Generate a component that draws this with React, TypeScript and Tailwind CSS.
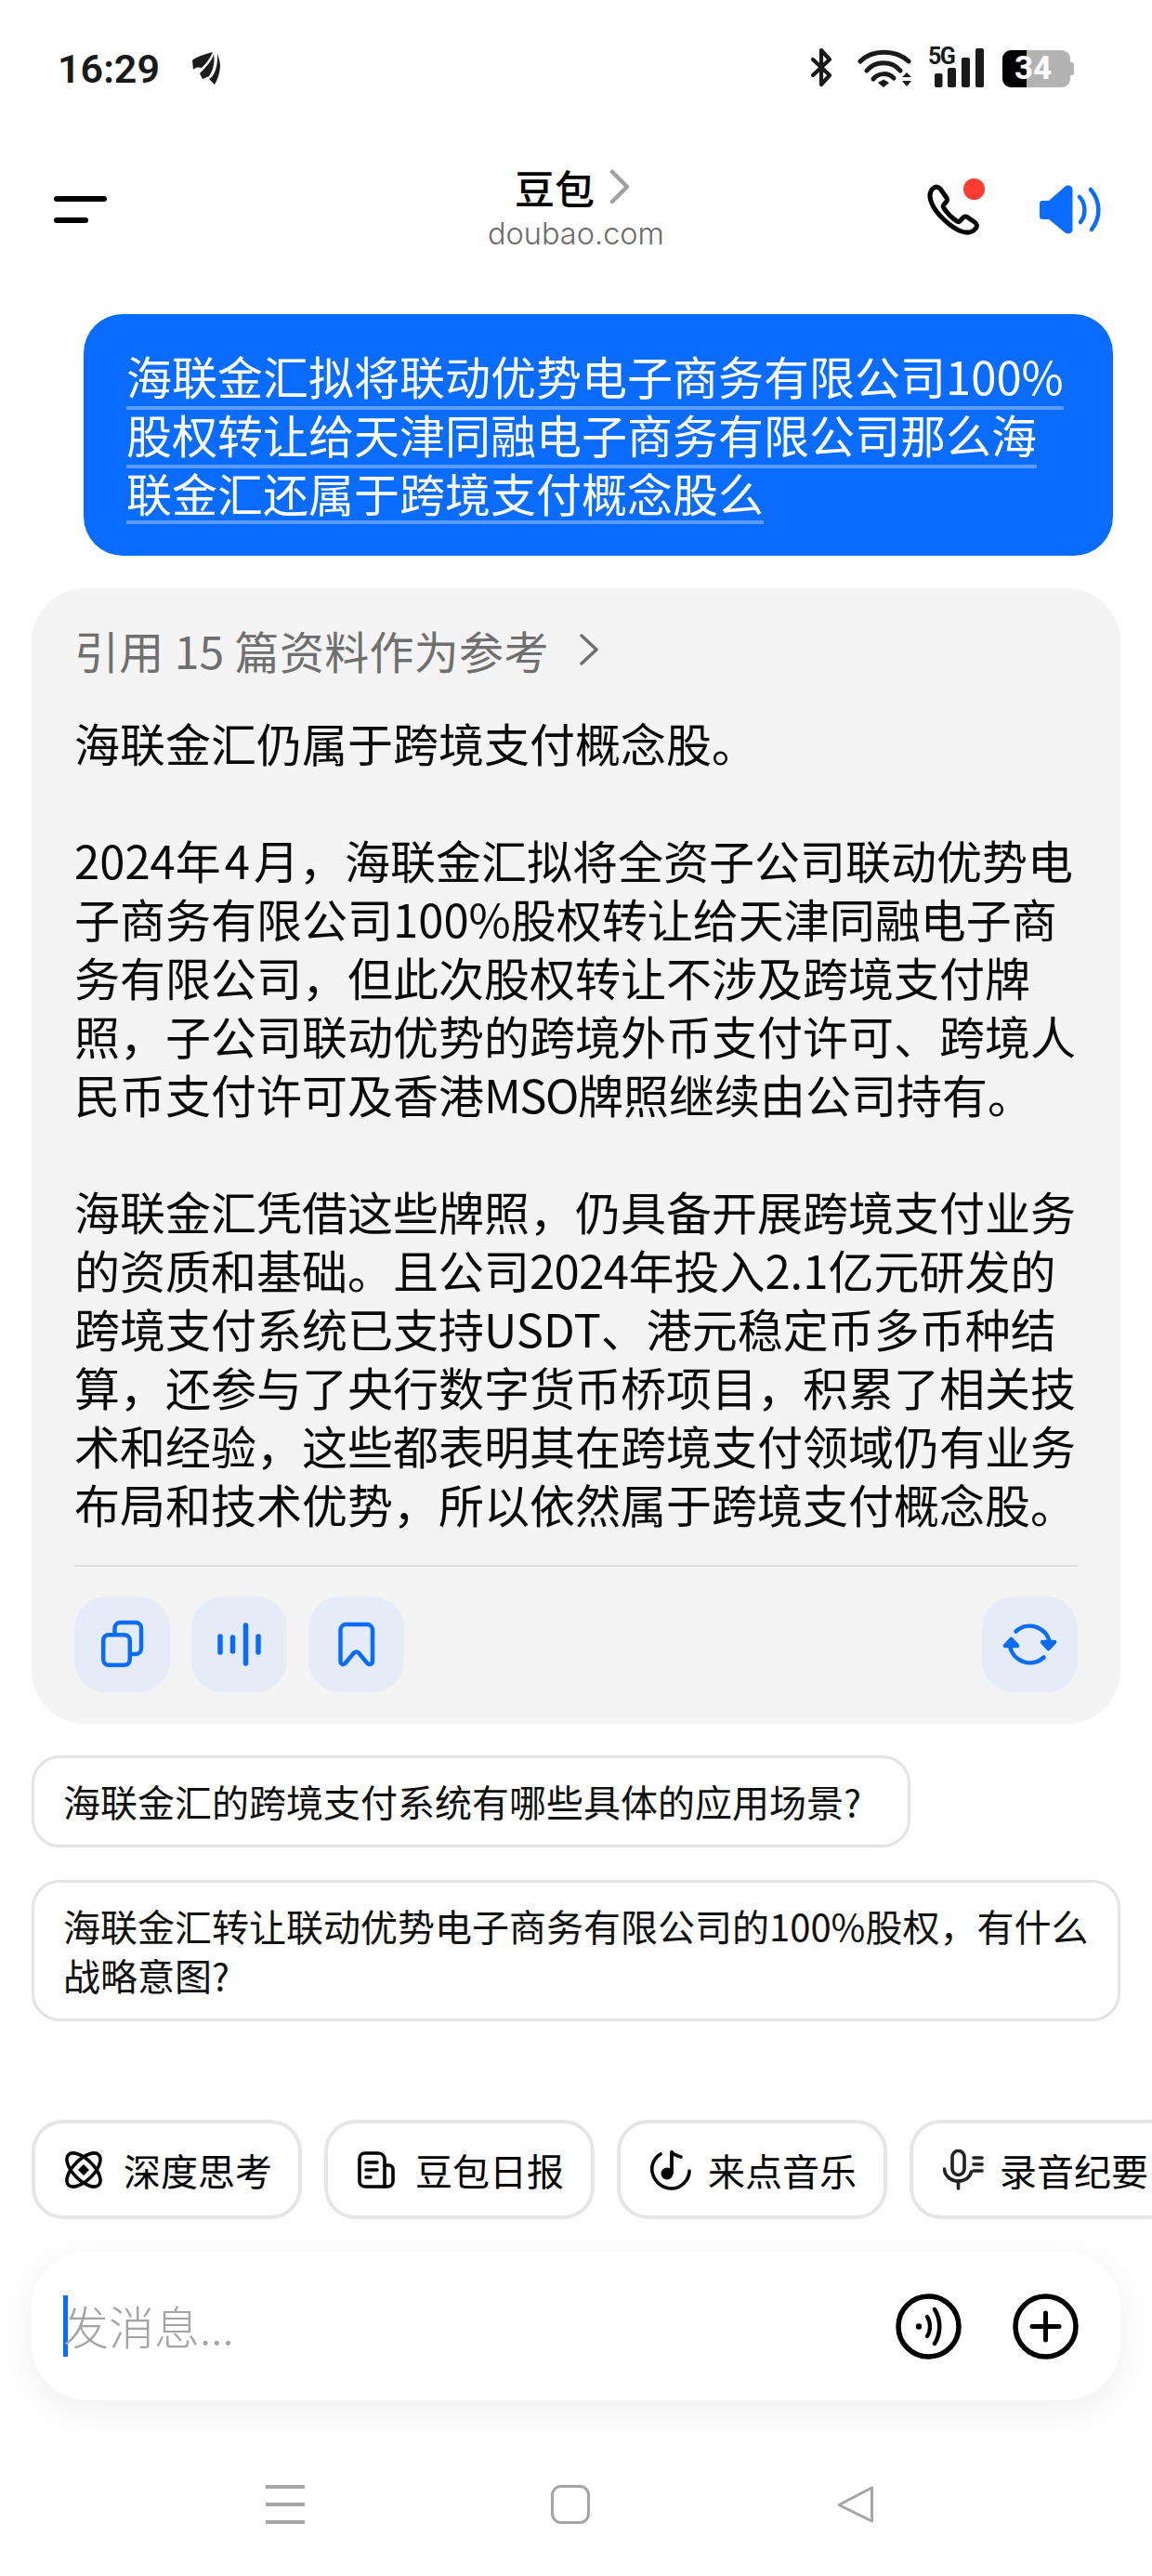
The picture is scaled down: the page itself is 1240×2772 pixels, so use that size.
import type {ReactNode} from "react";

const answer: ReactNode[] = [
	"海联金汇仍属于跨境支付概念股。",
	"",
	<>
		2024年<span className="mx-[4px]">4</span>月，海联金汇拟将全资子公司联动优势电
	</>,
	"子商务有限公司100%股权转让给天津同融电子商",
	"务有限公司，但此次股权转让不涉及跨境支付牌",
	"照，子公司联动优势的跨境外币支付许可、跨境人",
	<>
		民币支付许可及香港<span className="tracking-[-1.5px]">MSO</span>牌照继续由公司持有。
	</>,
	"",
	"海联金汇凭借这些牌照，仍具备开展跨境支付业务",
	<>
		的资质和基础。且公司<span className="tracking-[-0.6px]">2024</span>年投入2.1亿元研发的
	</>,
	"跨境支付系统已支持USDT、港元稳定币多币种结",
	"算，还参与了央行数字货币桥项目，积累了相关技",
	"术和经验，这些都表明其在跨境支付领域仍有业务",
	"布局和技术优势，所以依然属于跨境支付概念股。",
];

const question = [
	{text: "海联金汇拟将联动优势电子商务有限公司100%", offset: "underline-offset-[12px]"},
	{text: "股权转让给天津同融电子商务有限公司那么海", offset: "underline-offset-[12px]"},
	{text: "联金汇还属于跨境支付概念股么", offset: "underline-offset-[9px]"},
];

function LeafIcon() {
	return (
		<svg width="30" height="35" viewBox="0 0 30 35" fill="#1c1c1c">
			<path d="M22 0 C15 2 6 4 0 9 L1 19 C5 15 8 17 10 17 C14 13 18 9 22 0Z" />
			<path d="M23 2 C22 7 19 12 8 23 L11 29 C13 28 16 27 18 26 C21 22 25 13 23 2Z" />
			<path d="M27 1 C28 6 30 10 30 14 C30 22 27 30 24 35 L18 29 C23 27 28 16 27 1Z" />
		</svg>
	);
}

function StatusIcons() {
	return (
		<div className="flex items-start">
			<svg width="24" height="44" viewBox="0 0 24 44" fill="none" stroke="#1a1a1a" strokeWidth="4.2" strokeLinecap="round" strokeLinejoin="round">
				<path d="M3 13 L21 30 L12 40 V3 L21 13 L3 30" />
			</svg>
			<svg className="ml-[27px]" width="60" height="44" viewBox="0 0 60 44" fill="none" stroke="#1a1a1a" strokeWidth="5" strokeLinecap="round">
				<path d="M3 15 C16 2 41 2 55 15" />
				<path d="M10 25 C19 14 37 14 46 25" />
				<path d="M17 34 C23 27 33 27 39 33" />
				<path d="M22 38 L28 34.5 L34 38 L28 43Z" fill="#1a1a1a" stroke="none" />
				<path d="M48 32 L53 27 L58 32Z M48 36 H58 L53 42Z" fill="#1a1a1a" stroke="none" />
			</svg>
			<div className="relative ml-[16px] w-[60px] h-[44px]">
				<svg width="60" height="44" viewBox="0 0 60 44" fill="#1a1a1a">
					<rect x="7" y="28" width="8.5" height="15" rx="2" />
					<rect x="21" y="22" width="9" height="21" rx="2" />
					<rect x="36" y="11" width="9" height="32" rx="2" />
					<rect x="51" y="1" width="9" height="42" rx="2" />
				</svg>
				<span className="absolute left-0 top-[-3px] text-[25px] leading-[25px] font-bold tracking-[-1.5px] text-[#1a1a1a] font-['Roboto',sans-serif]">5G</span>
			</div>
			<div className="relative ml-[20px] flex items-center mt-[3px]">
				<div className="flex w-[73px] h-[40px] rounded-[9px] overflow-hidden">
					<div className="w-[26px] bg-black" />
					<div className="flex-1 bg-[#b3b3b3]" />
				</div>
				<div className="w-[4px] h-[14px] bg-[#b3b3b3] rounded-r-[3px]" />
				<span className="absolute left-[13px] top-0 h-[40px] leading-[40px] text-[35px] font-bold text-white font-['Roboto',sans-serif]">34</span>
			</div>
		</div>
	);
}

function PhoneIcon() {
	return (
		<svg width="56" height="56" viewBox="0 0 56 56" fill="none" stroke="#000" strokeWidth="5" strokeLinejoin="round">
			<path d="M6 5 C9 2 12 3 14 5 L21 15 C22 17 21 19 20 20 L18 22 C17 23 17 25 18 26 C22 32 27 37 32 40 C34 41 35 41 36 39 L38 37 C39 35 41 34.5 43 35.5 L51 41 C54 43 54 46 52 48 C48 53 43 53 37 51 C26 47 10 33 5 21 C2 14 2 9 6 5 Z" />
		</svg>
	);
}

function SpeakerIcon() {
	return (
		<svg width="66" height="54" viewBox="0 0 66 54" fill="none">
			<path d="M3 17 H10 L27 2 C31 -1 35.5 1 35.5 5 V48 C35.5 52 31 54 27 51 L10 37 H3 Q0 37 0 34 V20 Q0 17 3 17Z" fill="#0a6cff" />
			<path d="M43 13 C50 20 50 33 44 40" stroke="#0a6cff" strokeWidth="4.5" strokeLinecap="round" />
			<path d="M55 5 C66 18 66 35 56 48" stroke="#0a6cff" strokeWidth="4.5" strokeLinecap="round" />
		</svg>
	);
}

function ActionButton({children}: {children: ReactNode}) {
	return (
		<div className="w-[103px] h-[103px] rounded-[34px] bg-[#e5ecf7]">
			<svg width="103" height="103" viewBox="0 0 103 103" fill="none" stroke="#0a6cff" strokeWidth="4.5" strokeLinecap="round" strokeLinejoin="round">
				{children}
			</svg>
		</div>
	);
}

function AtomIcon() {
	return (
		<svg width="40" height="40" viewBox="0 0 40 40" fill="none" stroke="#000" strokeWidth="3.6">
			<ellipse cx="20" cy="20" rx="23" ry="11" transform="rotate(45 20 20)" />
			<ellipse cx="20" cy="20" rx="23" ry="11" transform="rotate(-45 20 20)" />
			<path d="M20 14 L26 20 L20 26 L14 20Z" fill="#000" stroke="none" />
		</svg>
	);
}

function DailyIcon() {
	return (
		<svg width="40" height="40" viewBox="0 0 40 40" fill="none" stroke="#000" strokeWidth="3.6" strokeLinecap="round" strokeLinejoin="round">
			<path d="M8 2 H22 C26 2 29 5 29 9 V38 H8 C4 38 2 35 2 32 V8 C2 5 4 2 8 2Z" />
			<path d="M29 15 H34 C37 15 38 18 38 20 V32 C38 36 35 38 32 38 H29" />
			<path d="M9 12 H21 M9 20 H21 M9 28 H14" />
		</svg>
	);
}

function MusicIcon() {
	return (
		<svg width="44" height="44" viewBox="0 0 44 44" fill="none" stroke="#000" strokeWidth="3.6" strokeLinecap="round">
			<path d="M11 5 C3 10 1 18 2 24 C4 35 13 42 23 42 C33 42 42 33 42 23" />
			<path d="M23 3 V25" strokeWidth="3.8" />
			<path d="M23 3 C26 6 29 7 33 8" />
			<circle cx="18" cy="26" r="6.5" fill="#000" stroke="none" />
		</svg>
	);
}

function MicIcon() {
	return (
		<svg width="44" height="44" viewBox="0 0 44 44" fill="none" stroke="#222" strokeWidth="3.6" strokeLinecap="round">
			<rect x="10" y="1.5" width="13" height="26" rx="6.5" />
			<path d="M1.5 21 C2 29 9 34 16.5 34 C24 34 29 30 30.5 24" />
			<path d="M16.5 34 V42" />
			<path d="M33 9 H42 M33 23 H42 M33 16 H42" strokeWidth="3.6" />
		</svg>
	);
}

function QuickChip({icon, label, iconGap}: {icon: ReactNode; label: string; iconGap: string}) {
	return (
		<div className="shrink-0 w-[291px] h-[107px] rounded-[34px] border-[4px] border-[#e6e6e6] bg-white flex items-center pl-[32px]">
			{icon}
			<span className={`${iconGap} text-[40px] leading-[50px] whitespace-nowrap text-black`}>{label}</span>
		</div>
	);
}

export default function App() {
	return (
		<div className="w-[1240px] h-[2772px] overflow-hidden bg-[#fefefe] text-black font-['Noto_Sans_CJK_SC','Noto_Sans',sans-serif]">
			{/* status bar */}
			<div className="h-[146px] flex items-center pl-[62px] pr-[84px] justify-between">
				<div className="flex items-center mt-[1px]">
					<span className="text-[43px] leading-[50px] font-semibold text-[#1a1a1a] font-['Roboto',sans-serif]">16:29</span>
					<span className="ml-[35px]">
						<LeafIcon />
					</span>
				</div>
				<StatusIcons />
			</div>

			{/* title */}
			<div className="relative h-[158px] flex items-center justify-between pl-[58px] pr-[55px]">
				<div className="flex flex-col gap-[17px]">
					<div className="w-[57px] h-[6px] rounded-full bg-black" />
					<div className="w-[37px] h-[6px] rounded-full bg-black" />
				</div>
				<div className="absolute left-[446px] w-[340px] top-[32px] flex flex-col items-center">
					<div className="flex items-center">
						<span className="text-[43px] leading-[46px] font-medium">豆包</span>
						<svg className="ml-[16px]" width="22" height="38" viewBox="0 0 22 38" fill="none" stroke="#a0a0a0" strokeWidth="4.5" strokeLinecap="round" strokeLinejoin="round">
							<path d="M3 3 L19 19 L3 35" />
						</svg>
					</div>
					<span className="mt-[8px] ml-[8px] text-[32.5px] leading-[40px] text-[#6b6b6b] font-['Inter',sans-serif] font-light">doubao.com</span>
				</div>
				<div className="flex items-center gap-[65px] mt-[2px]">
					<div className="relative">
						<PhoneIcon />
						<div className="absolute left-[39px] top-[-6px] w-[23px] h-[23px] rounded-full bg-[#ff3b30]" />
					</div>
					<SpeakerIcon />
				</div>
			</div>

			{/* question */}
			<div className="ml-[90px] mt-[34px] w-[1108px] h-[260px] rounded-[42px] bg-[#0a6cff] pl-[46px] pt-[34px] text-white text-[49px] leading-[63px]">
				{question.map((line) => (
					<div key={line.text} className="whitespace-nowrap">
						<span className={`underline decoration-[4px] decoration-[#5c9bff] [text-decoration-skip-ink:none] ${line.offset}`}>{line.text}</span>
					</div>
				))}
			</div>

			{/* answer */}
			<div className="ml-[34px] mt-[35px] w-[1172px] h-[1222px] rounded-[58px] bg-[#f4f4f4] pt-[36px] px-[46px]">
				<div className="h-[60px] flex items-center text-[48px] tracking-[0.3px] text-[#6f6f6f] leading-[60px]">
					<span>引用 15 篇资料作为参考</span>
					<svg className="ml-[32px]" width="22" height="34" viewBox="0 0 22 34" fill="none" stroke="#6f6f6f" strokeWidth="3.5" strokeLinecap="round" strokeLinejoin="round">
						<path d="M3 2 L19 17 L3 32" />
					</svg>
				</div>
				<div className="mt-[38px] text-[49px] leading-[63px] text-[#0a0a0a]">
					{answer.map((line, i) => (
						<div key={i} className="h-[63px] whitespace-nowrap">
							{line}
						</div>
					))}
				</div>
				<div className="mt-[35px] h-[2px] bg-[#dedede]" />
				<div className="mt-[32px] flex justify-between">
					<div className="flex gap-[23px]">
						<ActionButton>
							<rect x="31.2" y="41.2" width="28.6" height="32.6" rx="6" />
							<path d="M43.5 41 V34 A6 6 0 0 1 49.5 28 H66 A6 6 0 0 1 72 34 V56 A6 6 0 0 1 66 62 H61" />
						</ActionButton>
						<ActionButton>
							<path d="M31 43 V60 M44.5 44 V59 M58.5 31 V72 M72 43 V60" strokeWidth="5.5" />
						</ActionButton>
						<ActionButton>
							<path d="M34.5 36 A6 6 0 0 1 40.5 30 H63 A6 6 0 0 1 69 36 V69 C69 73 65.5 74 63.5 72 L54 60.5 C52.5 59 50.5 59 49 60.5 L39.5 72 C37.5 74 34.5 73 34.5 69 Z" />
						</ActionButton>
					</div>
					<ActionButton>
						<path d="M36.5 37.5 A22 22 0 0 1 73 50" />
						<path d="M66.5 65.5 A22 22 0 0 1 30 53" />
						<path d="M65 49 H78 L71.5 56 Z" fill="#0a6cff" />
						<path d="M25 53 H38 L31.5 46 Z" fill="#0a6cff" />
					</ActionButton>
				</div>
			</div>

			{/* suggestions */}
			<div className="ml-[34px] mt-[34px] w-[946px] h-[99px] rounded-[30px] border-[3px] border-[#e4e4e4] bg-white flex items-center pl-[31px] text-[40px] leading-[53px] text-[#111]">
				海联金汇的跨境支付系统有哪些具体的应用场景?
			</div>
			<div className="ml-[34px] mt-[35px] w-[1172px] h-[152px] rounded-[30px] border-[3px] border-[#e4e4e4] bg-white pl-[31px] pt-[20px] text-[40px] leading-[53px] text-[#111]">
				<div className="whitespace-nowrap">海联金汇转让联动优势电子商务有限公司的100%股权，有什么</div>
				<div>战略意图?</div>
			</div>

			{/* quick actions */}
			<div className="mt-[106px] pl-[34px] flex gap-[24px] overflow-hidden">
				<QuickChip icon={<AtomIcon />} label="深度思考" iconGap="ml-[23px]" />
				<QuickChip icon={<DailyIcon />} label="豆包日报" iconGap="ml-[22px]" />
				<QuickChip icon={<MusicIcon />} label="来点音乐" iconGap="ml-[18px]" />
				<QuickChip icon={<MicIcon />} label="录音纪要" iconGap="ml-[17px]" />
			</div>

			{/* input */}
			<div className="ml-[34px] mt-[35px] w-[1172px] h-[160px] rounded-[60px] bg-white shadow-[0_10px_36px_rgba(0,0,0,0.06)] flex items-center pl-[34px] pr-[45px]">
				<div className="w-[5px] h-[66px] bg-[#0a6cff]" />
				<span className="mt-[-2px] ml-[-5px] text-[49px] leading-[66px] font-light text-[#a3a3a3]">发消息...</span>
				<div className="ml-auto flex gap-[55px]">
					<svg width="71" height="71" viewBox="0 0 71 71" fill="none" stroke="#000" strokeLinecap="round">
						<circle cx="35.5" cy="35.5" r="32.5" strokeWidth="5.5" />
						<circle cx="25" cy="35.5" r="3.2" fill="#000" stroke="none" />
						<path d="M34 25 C38 31 38 40 34 46" strokeWidth="4.2" />
						<path d="M42 17 C49 28 49 43 42 54" strokeWidth="4.5" />
					</svg>
					<svg width="71" height="71" viewBox="0 0 71 71" fill="none" stroke="#000" strokeLinecap="round">
						<circle cx="35.5" cy="35.5" r="32.5" strokeWidth="5.5" />
						<path d="M35.5 21 V50 M21 35.5 H50" strokeWidth="5" />
					</svg>
				</div>
			</div>

			{/* nav bar */}
			<div className="mt-[91px] relative h-[42px] flex items-center pl-[286px]">
				<div className="w-[42px] h-[42px] flex flex-col justify-between">
					<div className="h-[4px] bg-[#a5a5a5]" />
					<div className="h-[4px] bg-[#a5a5a5]" />
					<div className="h-[4px] bg-[#a5a5a5]" />
				</div>
				<div className="ml-[265px] w-[42px] h-[42px] rounded-[11px] border-[3px] border-[#a5a5a5]" />
				<svg className="ml-[265px]" width="41" height="42" viewBox="0 0 41 42" fill="none" stroke="#a5a5a5" strokeWidth="3" strokeLinejoin="round">
					<path d="M38.5 3 V39 L3 21.5 Z" />
				</svg>
			</div>
		</div>
	);
}
